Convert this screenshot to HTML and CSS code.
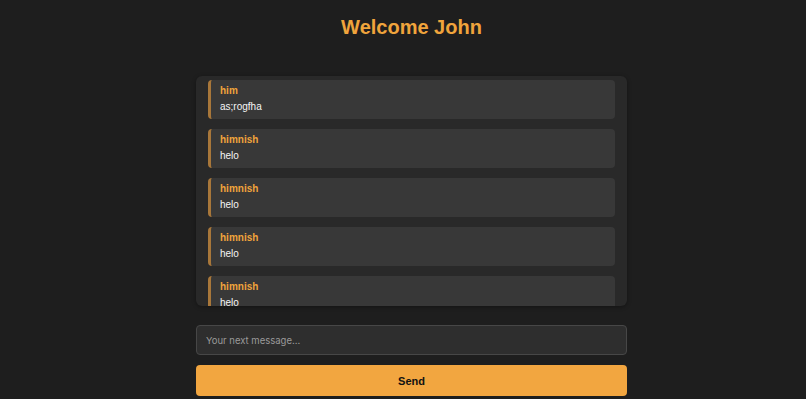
FILE: index.html
```html
<!DOCTYPE html>
<html>
<head>
<meta charset="utf-8">
<link rel="stylesheet" href="styles.css">
</head>
<body>
<div class="page">
  <h1 class="title">Welcome John</h1>
  <div class="chat">
    <div class="msg"><div class="name">him</div><div class="text">as;rogfha</div></div>
    <div class="msg"><div class="name">himnish</div><div class="text">helo</div></div>
    <div class="msg"><div class="name">himnish</div><div class="text">helo</div></div>
    <div class="msg"><div class="name">himnish</div><div class="text">helo</div></div>
    <div class="msg"><div class="name">himnish</div><div class="text">helo</div></div>
  </div>
  <input class="input" type="text" placeholder="Your next message...">
  <button class="send">Send</button>
</div>
</body>
</html>
```
FILE: styles.css
```css
html, body {
  margin: 0;
  padding: 0;
  background: #1e1e1e;
}
body {
  padding-left: 17px;
  font-family: "Liberation Sans", Arial, sans-serif;
  color: #e8e8e8;
}
.page {
  width: 431px;
  margin: 0 auto;
  padding-top: 15px;
  display: flex;
  flex-direction: column;
}
.title {
  margin: 0;
  text-align: center;
  font-size: 20px;
  line-height: 24px;
  font-weight: bold;
  color: #f0a43c;
}
.chat {
  margin-top: 37px;
  height: 230px;
  box-sizing: border-box;
  background: #292929;
  border-radius: 6px;
  padding: 4px 12px 0;
  overflow: hidden;
  display: flex;
  flex-direction: column;
  gap: 10px;
  box-shadow: 0 1px 4px rgba(0,0,0,0.35);
}
.msg {
  flex: none;
  background: #383838;
  border-left: 3px solid #a8773a;
  border-radius: 4px;
  padding: 5px 10px 6px 9px;
}
.name {
  font-size: 10px;
  line-height: 12px;
  font-weight: bold;
  color: #f0a43c;
  margin-bottom: 4px;
}
.text {
  font-size: 10px;
  line-height: 12px;
  color: #f5f5f5;
}
.input {
  margin: 19px 0 0;
  height: 30px;
  box-sizing: border-box;
  background: #2e2e2e;
  border: 1px solid #474747;
  border-radius: 4px;
  padding: 0 9px;
  font-family: Inter, "Liberation Sans", sans-serif;
  font-size: 9.5px;
  line-height: 16px;
  color: #e8e8e8;
  outline: none;
}
.input::placeholder {
  color: #9a9a9a;
}
.send {
  margin: 10px 0 0;
  height: 31px;
  background: #f2a640;
  border: none;
  border-radius: 4px;
  font-family: "Liberation Sans", Arial, sans-serif;
  font-weight: bold;
  font-size: 11px;
  line-height: 14px;
  color: #111;
}
```
